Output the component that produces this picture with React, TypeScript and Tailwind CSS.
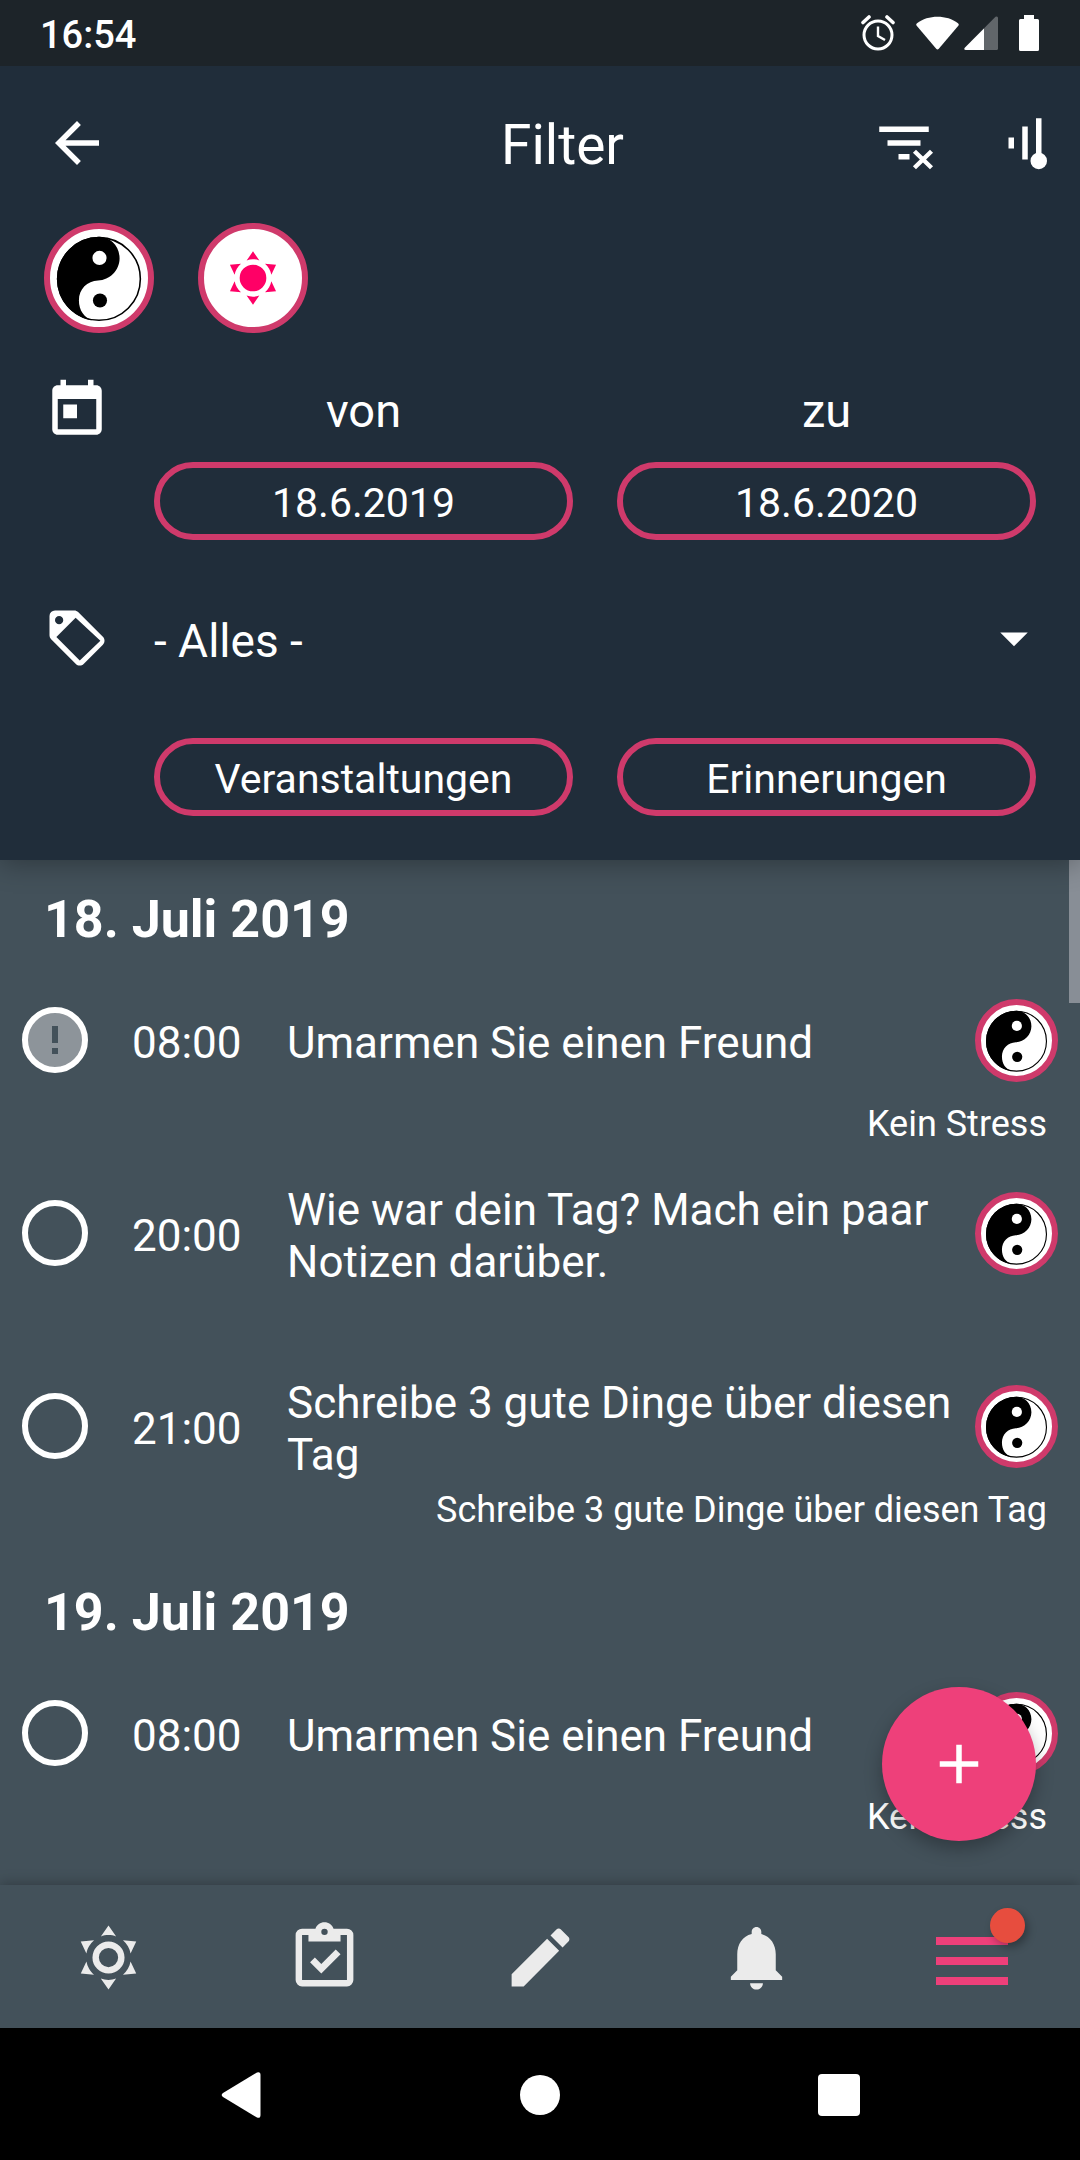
import React from "react";

const SUN_RAYS =
  "M12,2L14.39,5.42C13.65,5.15 12.84,5 12,5C11.16,5 10.35,5.15 9.61,5.42L12,2M3.34,7L7.5,6.65C6.9,7.16 6.36,7.78 5.94,8.5C5.5,9.24 5.25,10 5.11,10.79L3.34,7M3.36,17L5.12,13.23C5.26,14 5.53,14.78 5.95,15.5C6.37,16.24 6.91,16.86 7.5,17.37L3.36,17M20.65,7L18.88,10.79C18.74,10 18.47,9.23 18.05,8.5C17.63,7.78 17.1,7.15 16.5,6.64L20.65,7M20.64,17L16.5,17.36C17.09,16.85 17.62,16.22 18.04,15.5C18.46,14.77 18.73,14 18.87,13.21L20.64,17M12,22L9.59,18.56C10.33,18.83 11.14,19 12,19C12.82,19 13.63,18.83 14.37,18.56L12,22Z";

function Icon({ d, className }: { d: string; className: string }) {
  return (
    <svg viewBox="0 0 24 24" fill="currentColor" fillRule="evenodd" aria-hidden="true" className={className}>
      <path d={d} />
    </svg>
  );
}

function YinYang() {
  return (
    <svg viewBox="0 0 100 100" aria-hidden="true" className="h-full w-full">
      <circle cx="50" cy="51" r="42.2" fill="#fff" stroke="#000" strokeWidth="1.6" />
      <path
        d="M50 8C61 8 71 17 71 30C71 42 61 52 49 52.500C38 53 29.500 61 29.500 73C29.500 83 35 90.500 43 93.400A43 43 0 0 1 7 51A43 43 0 0 1 50 8Z"
        fill="#000"
      />
      <circle cx="50.5" cy="29.500" r="7.2" fill="#fff" />
      <circle cx="51" cy="73" r="7.2" fill="#000" />
    </svg>
  );
}

function StatusBar() {
  return (
    <div className="relative z-20 flex h-[66px] items-center justify-between bg-[#1d2429] pr-[41px] pl-[40px]">
      <span className="pt-1 text-[38px] leading-none font-medium">16:54</span>
      <div className="flex items-center" aria-hidden="true">
        <svg viewBox="0 0 34 36" className="mr-[21px] h-[36px] w-[34px]" fill="none" stroke="#fff">
          <circle cx="17" cy="20" r="14" strokeWidth="3" />
          <path d="M17 11.5V21L24 25" strokeWidth="2.4" />
          <path d="M2 7.5L8 2M32 7.5L26 2" strokeWidth="3.6" strokeLinecap="round" />
        </svg>
        <svg viewBox="0 0 43 34" className="mr-[5px] h-[34px] w-[43px]" fill="#fff">
          <path d="M1 7.2C12-1.4 31-1.4 42 7.2Q43.4 8.4 42.3 9.8L22.8 32.8Q21.5 34.2 20.2 32.8L.7 9.8Q-.4 8.4 1 7.2Z" />
        </svg>
        <svg viewBox="0 0 34 34" className="mr-[21px] h-[34px] w-[34px]">
          <path d="M31.500 .8Q34 -.2 34 2V32.500Q34 34 32.500 34H2Q-.6 34 .8 31.800Z" fill="#61666a" />
          <path d="M20 12.500V34H2Q-.6 34 .8 31.800Z" fill="#fff" />
        </svg>
        <svg viewBox="0 0 20 36" className="h-[36px] w-[20px]" fill="#fff">
          <path d="M5 0H15V4H18.500Q20 4 20 5.500V34.500Q20 36 18.500 36H1.500Q0 36 0 34.500V5.500Q0 4 1.500 4H5Z" />
        </svg>
      </div>
    </div>
  );
}

function Toolbar() {
  return (
    <div className="flex h-[154px] items-center">
      <button type="button" aria-label="Zurück" className="flex h-full w-[154px] items-center justify-center">
        <Icon className="h-[66px] w-[66px]" d="M20 11H7.830l5.590-5.590L12 4l-8 8 8 8 1.410-1.410L7.830 13H20v-2z" />
      </button>
      <h1 className="flex-1 pt-1 pl-[128px] text-center text-[55px] leading-none font-normal">Filter</h1>
      <button type="button" aria-label="Filter löschen" className="flex h-full w-[121px] items-center justify-center">
        <svg viewBox="0 0 24 24" className="h-[66px] w-[66px] overflow-visible" fill="#fff">
          <path d="M3 6H21V8H3ZM6 11H18V13H6ZM10 16H14V18H10Z" />
          <path d="M15.800 15L22 21M22 15L15.800 21" stroke="#fff" strokeWidth="1.600" />
        </svg>
      </button>
      <button type="button" aria-label="Sortierung" className="flex h-full w-[116px] items-center justify-end pr-[22px]">
        <svg viewBox="0 0 24 24" className="h-[66px] w-[66px]" fill="#fff">
          <path d="M6 10H8V14H6ZM11 6H13V18H11ZM16 3H18V17H16Z" />
          <circle cx="17" cy="18.500" r="3" />
        </svg>
      </button>
    </div>
  );
}

const avatarRing = "shrink-0 overflow-hidden rounded-full border-[6px] border-[#cf3a6b] bg-white";
const pill =
  "flex h-[78px] items-center justify-center rounded-full border-[6px] border-[#cf3a6b] pt-1 text-[41px] leading-none";

function FilterPanel() {
  return (
    <header className="relative z-10 bg-[#202d3a] shadow-[0_4px_26px_rgba(0,0,0,0.3)]">
      <Toolbar />
      <div className="flex gap-[44px] px-[44px] pt-[3px]">
        <button type="button" aria-label="Yin und Yang" className={`${avatarRing} h-[110px] w-[110px]`}>
          <YinYang />
        </button>
        <button
          type="button"
          aria-label="Sonne"
          className={`${avatarRing} flex h-[110px] w-[110px] items-center justify-center text-[#ff0066]`}
        >
          <Icon className="h-[64px] w-[64px]" d={`M12,7A5,5 0 0,1 17,12A5,5 0 0,1 12,17A5,5 0 0,1 7,12A5,5 0 0,1 12,7${SUN_RAYS}`} />
        </button>
      </div>

      <div className="grid grid-cols-[66px_1fr_1fr] gap-x-[44px] px-[44px] pt-[44px] pb-[44px]">
        <Icon
          className="h-[66px] w-[66px]"
          d="M19 3h-1V1h-2v2H8V1H6v2H5c-1.110 0-1.990.9-1.990 2L3 19c0 1.100.89 2 2 2h14c1.100 0 2-.9 2-2V5c0-1.100-.9-2-2-2zm0 16H5V8h14v11zM7 10h5v5H7z"
        />
        <label htmlFor="from" className="text-center text-[47px] leading-[68px]">von</label>
        <label htmlFor="to" className="text-center text-[47px] leading-[68px]">zu</label>

        <button id="from" type="button" className={`${pill} col-start-2 mt-[17px]`}>18.6.2019</button>
        <button id="to" type="button" className={`${pill} mt-[17px]`}>18.6.2020</button>

        <Icon
          className="mt-[65px] h-[66px] w-[66px]"
          d="M21.410 11.580L12.410 2.580C12.050 2.220 11.550 2 11 2H4A2 2 0 0 0 2 4V11C2 11.550 2.220 12.050 2.590 12.420L11.590 21.420C11.950 21.780 12.450 22 13 22C13.550 22 14.050 21.780 14.410 21.410L21.410 14.410C21.770 14.050 22 13.550 22 13C22 12.450 21.770 11.940 21.410 11.580ZM13 20.200L4.500 11.600L11.500 4.600L20.500 13ZM5.500 4A1.500 1.500 0 0 0 5.500 7A1.500 1.500 0 0 0 5.500 4Z"
        />
        <div className="relative col-span-2 mt-[65px]">
          <select
            aria-label="Kategorie"
            className="h-[66px] w-full appearance-none bg-transparent pt-1.5 text-[46px] leading-[60px]"
          >
            <option>- Alles -</option>
          </select>
          <Icon className="pointer-events-none absolute top-0 right-[-11px] h-[66px] w-[66px]" d="M7 10l5 5 5-5z" />
        </div>

        <button type="button" className={`${pill} col-start-2 mt-[67px]`}>Veranstaltungen</button>
        <button type="button" className={`${pill} mt-[67px]`}>Erinnerungen</button>
      </div>
    </header>
  );
}

type Entry = { time: string; title: string; note?: string; alert?: boolean };

const days: { date: string; entries: Entry[] }[] = [
  {
    date: "18. Juli 2019",
    entries: [
      { time: "08:00", title: "Umarmen Sie einen Freund", note: "Kein Stress", alert: true },
      { time: "20:00", title: "Wie war dein Tag? Mach ein paar Notizen darüber." },
      { time: "21:00", title: "Schreibe 3 gute Dinge über diesen Tag", note: "Schreibe 3 gute Dinge über diesen Tag" },
    ],
  },
  {
    date: "19. Juli 2019",
    entries: [{ time: "08:00", title: "Umarmen Sie einen Freund", note: "Kein Stress" }],
  },
];

function EntryRow({ entry }: { entry: Entry }) {
  return (
    <li className="pb-[25px]">
      <div className="flex h-[128px] items-center px-[22px]">
        <label className="relative h-[66px] w-[66px] shrink-0">
          <input
            type="checkbox"
            aria-label={entry.title}
            className={`block h-full w-full appearance-none rounded-full border-[6px] border-white ${entry.alert ? "bg-[#8d949a]" : ""}`}
          />
          {entry.alert && (
            <svg viewBox="0 0 66 66" aria-hidden="true" className="pointer-events-none absolute inset-0" fill="#43515a">
              <path d="M30 19H36V36H30ZM30 41H36V47H30Z" />
            </svg>
          )}
        </label>
        <time className="ml-[44px] w-[155px] shrink-0 pt-[5px] text-[44px] leading-[52px]">{entry.time}</time>
        <p className="min-w-0 flex-1 pt-[5px] text-[44px] leading-[52px]">{entry.title}</p>
        <div className={`${avatarRing} ml-[16px] h-[83px] w-[83px]`}>
          <YinYang />
        </div>
      </div>
      <p className="h-[40px] px-[33px] text-right text-[36px] leading-[40px]">{entry.note}</p>
    </li>
  );
}

function Agenda() {
  return (
    <main className="relative flex-1 overflow-hidden pt-[2px]">
      {days.map((day) => (
        <section key={day.date}>
          <h2 className="h-[114px] px-[44px] text-[52px] leading-[116px] font-bold">{day.date}</h2>
          <ul>
            {day.entries.map((entry) => (
              <EntryRow key={entry.time} entry={entry} />
            ))}
          </ul>
        </section>
      ))}
      <div className="absolute top-0 right-0 h-[143px] w-[11px] bg-[#888e96]" />
      <button
        type="button"
        aria-label="Hinzufügen"
        className="absolute right-[44px] bottom-[44px] flex h-[154px] w-[154px] items-center justify-center rounded-full bg-[#ee407a] shadow-[0_8px_18px_rgba(0,0,0,0.28)]"
      >
        <Icon className="h-[66px] w-[66px]" d="M19 13h-6v6h-2v-6H5v-2h6V5h2v6h6v2z" />
      </button>
    </main>
  );
}

const tabs = [
  {
    label: "Heute",
    d: `M12,7A5,5 0 0,1 17,12A5,5 0 0,1 12,17A5,5 0 0,1 7,12A5,5 0 0,1 12,7M12,9A3,3 0 0,0 9,12A3,3 0 0,0 12,15A3,3 0 0,0 15,12A3,3 0 0,0 12,9${SUN_RAYS}`,
  },
  {
    label: "Aufgaben",
    d: "M19,3H14.82C14.4,1.84 13.3,1 12,1C10.7,1 9.6,1.84 9.18,3H5A2,2 0 0,0 3,5V19A2,2 0 0,0 5,21H19A2,2 0 0,0 21,19V5A2,2 0 0,0 19,3M12,3A1,1 0 0,1 13,4A1,1 0 0,1 12,5A1,1 0 0,1 11,4A1,1 0 0,1 12,3M7,7H17V5H19V19H5V5H7V7M7.5,13.5L9,12L11,14L15.5,9.5L17,11L11,17L7.5,13.5Z",
  },
  {
    label: "Notizen",
    d: "M20.71,7.04C21.1,6.65 21.1,6 20.71,5.63L18.37,3.29C18,2.9 17.35,2.9 16.96,3.29L15.12,5.12L18.87,8.87M3,17.25V21H6.75L17.81,9.93L14.06,6.18L3,17.25Z",
  },
  {
    label: "Erinnerungen",
    d: "M12 22c1.100 0 2-.9 2-2h-4c0 1.100.89 2 2 2zm6-6v-5c0-3.070-1.640-5.640-4.500-6.320V4c0-.83-.67-1.500-1.500-1.500s-1.500.67-1.500 1.500v.68C7.630 5.360 6 7.920 6 11v5l-2 2v1h16v-1l-2-2z",
  },
];

function BottomTabs() {
  return (
    <nav className="relative z-10 grid h-[143px] grid-cols-5 bg-[#43515a] text-[#ebebeb] shadow-[0_-2px_12px_rgba(0,0,0,0.25)]">
      {tabs.map((tab) => (
        <button key={tab.label} type="button" aria-label={tab.label} className="flex items-center justify-center pt-0.5">
          <Icon className="h-[77px] w-[77px]" d={tab.d} />
        </button>
      ))}
      <button type="button" aria-label="Menü" className="flex items-center justify-center pt-2">
        <span className="relative flex w-[72px] flex-col gap-3">
          <span className="h-2 bg-[#ee407a]" />
          <span className="h-2 bg-[#ee407a]" />
          <span className="h-2 bg-[#ee407a]" />
          <span className="absolute -top-[29px] -right-[17px] h-[35px] w-[35px] rounded-full bg-[#e74d3e] shadow-[3px_4px_8px_rgba(0,0,0,0.3)]" />
        </span>
      </button>
    </nav>
  );
}

function SystemBar() {
  return (
    <div className="grid h-[132px] grid-cols-3 bg-black px-[91px] pt-0.5">
      <button type="button" aria-label="Zurück" className="flex items-center justify-center">
        <svg viewBox="0 0 40 46" className="h-[46px] w-[40px]" fill="#fff">
          <path d="M36 .5Q39.500 -.8 39.500 3V43Q39.500 46.800 36 45.500L2 25Q-.6 23 2 21Z" />
        </svg>
      </button>
      <button type="button" aria-label="Startseite" className="flex items-center justify-center">
        <span className="h-[40px] w-[40px] rounded-full bg-white" />
      </button>
      <button type="button" aria-label="Übersicht" className="flex items-center justify-center">
        <span className="h-[42px] w-[42px] rounded bg-white" />
      </button>
    </div>
  );
}

export default function App() {
  return (
    <div className="flex min-h-screen flex-col bg-[#43515a] font-['Roboto',sans-serif] text-white">
      <StatusBar />
      <FilterPanel />
      <Agenda />
      <BottomTabs />
      <SystemBar />
    </div>
  );
}
